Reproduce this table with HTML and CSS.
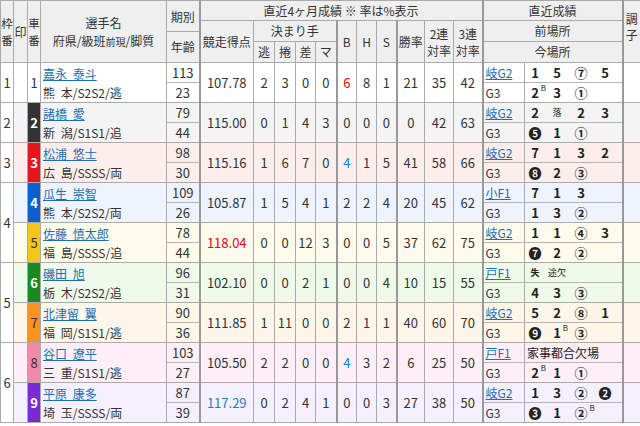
FILE: index.html
```html
<!DOCTYPE html>
<html lang="ja">
<head>
<meta charset="utf-8">
<title>出走表</title>
<link rel="stylesheet" href="styles.css">
</head>
<body>
<table class="tbl">
<colgroup>
<col class="c-waku"><col class="c-mark"><col class="c-sha"><col class="c-name"><col class="c-kb">
<col class="c-score"><col class="c-k1"><col class="c-k2"><col class="c-k3"><col class="c-k4">
<col class="c-b"><col class="c-h"><col class="c-s"><col class="c-r1"><col class="c-r2"><col class="c-r3">
<col class="c-race"><col class="c-res"><col class="c-cho">
</colgroup>
<thead>
<tr class="h1">
<th rowspan="3" class="vt">枠<br>番</th>
<th rowspan="3">印</th>
<th rowspan="3" class="vt">車<br>番</th>
<th rowspan="3" class="hname"><div class="hn1">選手名</div><div class="hn2">府県/級班<span class="sm">前現</span>/脚質</div></th>
<th rowspan="3" class="hkb"><div class="kb1">期別</div><div class="kb2">年齢</div></th>
<th colspan="11" class="tl">直近4ヶ月成績 ※ 率は%表示</th>
<th colspan="2" class="tl">直近成績</th>
<th rowspan="3" class="hcho tl">調<br>子</th>
</tr>
<tr class="h2">
<th rowspan="2" class="tl">競走得点</th>
<th colspan="4">決まり手</th>
<th rowspan="2" class="tl">B</th>
<th rowspan="2">H</th>
<th rowspan="2">S</th>
<th rowspan="2" class="tl">勝率</th>
<th rowspan="2" class="two">2連<br>対率</th>
<th rowspan="2" class="two">3連<br>対率</th>
<th colspan="2" class="tl">前場所</th>
</tr>
<tr class="h3">
<th>逃</th><th>捲</th><th>差</th><th>マ</th>
<th colspan="2" class="tl">今場所</th>
</tr>
</thead>
<tbody>
<!-- 1 -->
<tr class="r1 a">
<td rowspan="2" class="waku">1</td>
<td rowspan="2" class="mark"></td>
<td rowspan="2" class="sha s1">1</td>
<td rowspan="2" class="name"><div class="nm"><a href="#">嘉永 泰斗</a></div><div class="info">熊 本/S2S2/逃</div></td>
<td class="kb">113</td>
<td rowspan="2" class="tl">107.78</td>
<td rowspan="2">2</td><td rowspan="2">3</td><td rowspan="2">0</td><td rowspan="2">0</td>
<td rowspan="2" class="tl red">6</td><td rowspan="2">8</td><td rowspan="2">1</td>
<td rowspan="2" class="tl">21</td><td rowspan="2">35</td><td rowspan="2">42</td>
<td class="race tl"><a href="#">岐G2</a></td>
<td class="res"><div class="slots"><span>1</span><span>5</span><span>⑦</span><span>5</span></div></td>
<td rowspan="2" class="cho tl"></td>
</tr>
<tr class="r1 b">
<td class="kb">23</td>
<td class="race tl">G3</td>
<td class="res"><div class="slots"><span>2<i class="sup">B</i></span><span>3</span><span>①</span><span></span></div></td>
</tr>
<!-- 2 -->
<tr class="r2 a">
<td rowspan="2" class="waku">2</td>
<td rowspan="2" class="mark"></td>
<td rowspan="2" class="sha s2">2</td>
<td rowspan="2" class="name"><div class="nm"><a href="#">諸橋 愛</a></div><div class="info">新 潟/S1S1/追</div></td>
<td class="kb">79</td>
<td rowspan="2" class="tl">115.00</td>
<td rowspan="2">0</td><td rowspan="2">1</td><td rowspan="2">4</td><td rowspan="2">3</td>
<td rowspan="2" class="tl">0</td><td rowspan="2">0</td><td rowspan="2">0</td>
<td rowspan="2" class="tl">0</td><td rowspan="2">42</td><td rowspan="2">63</td>
<td class="race tl"><a href="#">岐G2</a></td>
<td class="res"><div class="slots"><span>2</span><span class="note">落</span><span>2</span><span>3</span></div></td>
<td rowspan="2" class="cho tl"></td>
</tr>
<tr class="r2 b">
<td class="kb">44</td>
<td class="race tl">G3</td>
<td class="res"><div class="slots"><span>❺</span><span>1</span><span>①</span><span></span></div></td>
</tr>
<!-- 3 -->
<tr class="r3 a">
<td rowspan="2" class="waku">3</td>
<td rowspan="2" class="mark"></td>
<td rowspan="2" class="sha s3">3</td>
<td rowspan="2" class="name"><div class="nm"><a href="#">松浦 悠士</a></div><div class="info">広 島/SSSS/両</div></td>
<td class="kb">98</td>
<td rowspan="2" class="tl">115.16</td>
<td rowspan="2">1</td><td rowspan="2">6</td><td rowspan="2">7</td><td rowspan="2">0</td>
<td rowspan="2" class="tl blue">4</td><td rowspan="2">1</td><td rowspan="2">5</td>
<td rowspan="2" class="tl">41</td><td rowspan="2">58</td><td rowspan="2">66</td>
<td class="race tl"><a href="#">岐G2</a></td>
<td class="res"><div class="slots"><span>7</span><span>1</span><span>3</span><span>2</span></div></td>
<td rowspan="2" class="cho tl"></td>
</tr>
<tr class="r3 b">
<td class="kb">30</td>
<td class="race tl">G3</td>
<td class="res"><div class="slots"><span>❽</span><span>2</span><span>③</span><span></span></div></td>
</tr>
<!-- 4 -->
<tr class="r4 a">
<td rowspan="4" class="waku">4</td>
<td rowspan="2" class="mark"></td>
<td rowspan="2" class="sha s4">4</td>
<td rowspan="2" class="name"><div class="nm"><a href="#">瓜生 崇智</a></div><div class="info">熊 本/S2S2/両</div></td>
<td class="kb">109</td>
<td rowspan="2" class="tl">105.87</td>
<td rowspan="2">1</td><td rowspan="2">5</td><td rowspan="2">4</td><td rowspan="2">1</td>
<td rowspan="2" class="tl">2</td><td rowspan="2">2</td><td rowspan="2">4</td>
<td rowspan="2" class="tl">20</td><td rowspan="2">45</td><td rowspan="2">62</td>
<td class="race tl"><a href="#">小F1</a></td>
<td class="res"><div class="slots"><span>7</span><span>1</span><span>3</span><span></span></div></td>
<td rowspan="2" class="cho tl"></td>
</tr>
<tr class="r4 b">
<td class="kb">26</td>
<td class="race tl">G3</td>
<td class="res"><div class="slots"><span>1</span><span>3</span><span>②</span><span></span></div></td>
</tr>
<!-- 5 -->
<tr class="r5 a">
<td rowspan="2" class="mark"></td>
<td rowspan="2" class="sha s5">5</td>
<td rowspan="2" class="name"><div class="nm"><a href="#">佐藤 慎太郎</a></div><div class="info">福 島/SSSS/追</div></td>
<td class="kb">78</td>
<td rowspan="2" class="tl red">118.04</td>
<td rowspan="2">0</td><td rowspan="2">0</td><td rowspan="2">12</td><td rowspan="2">3</td>
<td rowspan="2" class="tl">0</td><td rowspan="2">0</td><td rowspan="2">5</td>
<td rowspan="2" class="tl">37</td><td rowspan="2">62</td><td rowspan="2">75</td>
<td class="race tl"><a href="#">岐G2</a></td>
<td class="res"><div class="slots"><span>1</span><span>1</span><span>④</span><span>3</span></div></td>
<td rowspan="2" class="cho tl"></td>
</tr>
<tr class="r5 b">
<td class="kb">44</td>
<td class="race tl">G3</td>
<td class="res"><div class="slots"><span>❼</span><span>2</span><span>②</span><span></span></div></td>
</tr>
<!-- 6 -->
<tr class="r6 a">
<td rowspan="4" class="waku">5</td>
<td rowspan="2" class="mark"></td>
<td rowspan="2" class="sha s6">6</td>
<td rowspan="2" class="name"><div class="nm"><a href="#">磯田 旭</a></div><div class="info">栃 木/S2S2/追</div></td>
<td class="kb">96</td>
<td rowspan="2" class="tl">102.10</td>
<td rowspan="2">0</td><td rowspan="2">0</td><td rowspan="2">2</td><td rowspan="2">1</td>
<td rowspan="2" class="tl">0</td><td rowspan="2">0</td><td rowspan="2">4</td>
<td rowspan="2" class="tl">10</td><td rowspan="2">15</td><td rowspan="2">55</td>
<td class="race tl"><a href="#">戸F1</a></td>
<td class="res"><div class="slots"><span class="note b">失</span><span class="note">途欠</span><span></span><span></span></div></td>
<td rowspan="2" class="cho tl"></td>
</tr>
<tr class="r6 b">
<td class="kb">31</td>
<td class="race tl">G3</td>
<td class="res"><div class="slots"><span>4</span><span>3</span><span>③</span><span></span></div></td>
</tr>
<!-- 7 -->
<tr class="r7 a">
<td rowspan="2" class="mark"></td>
<td rowspan="2" class="sha s7">7</td>
<td rowspan="2" class="name"><div class="nm"><a href="#">北津留 翼</a></div><div class="info">福 岡/S1S1/逃</div></td>
<td class="kb">90</td>
<td rowspan="2" class="tl">111.85</td>
<td rowspan="2">1</td><td rowspan="2">11</td><td rowspan="2">0</td><td rowspan="2">0</td>
<td rowspan="2" class="tl">2</td><td rowspan="2">1</td><td rowspan="2">1</td>
<td rowspan="2" class="tl">40</td><td rowspan="2">60</td><td rowspan="2">70</td>
<td class="race tl"><a href="#">岐G2</a></td>
<td class="res"><div class="slots"><span>5</span><span>2</span><span>⑧</span><span>1</span></div></td>
<td rowspan="2" class="cho tl"></td>
</tr>
<tr class="r7 b">
<td class="kb">36</td>
<td class="race tl">G3</td>
<td class="res"><div class="slots"><span>❾</span><span>1<i class="sup">B</i></span><span>③</span><span></span></div></td>
</tr>
<!-- 8 -->
<tr class="r8 a">
<td rowspan="4" class="waku">6</td>
<td rowspan="2" class="mark"></td>
<td rowspan="2" class="sha s8">8</td>
<td rowspan="2" class="name"><div class="nm"><a href="#">谷口 遼平</a></div><div class="info">三 重/S1S1/逃</div></td>
<td class="kb">103</td>
<td rowspan="2" class="tl">105.50</td>
<td rowspan="2">2</td><td rowspan="2">2</td><td rowspan="2">0</td><td rowspan="2">0</td>
<td rowspan="2" class="tl blue">4</td><td rowspan="2">3</td><td rowspan="2">2</td>
<td rowspan="2" class="tl">6</td><td rowspan="2">25</td><td rowspan="2">50</td>
<td class="race tl"><a href="#">戸F1</a></td>
<td class="res"><div class="slots"><span class="absent">家事都合欠場</span></div></td>
<td rowspan="2" class="cho tl"></td>
</tr>
<tr class="r8 b">
<td class="kb">27</td>
<td class="race tl">G3</td>
<td class="res"><div class="slots"><span>2<i class="sup">B</i></span><span>1</span><span>①</span><span></span></div></td>
</tr>
<!-- 9 -->
<tr class="r9 a">
<td rowspan="2" class="mark"></td>
<td rowspan="2" class="sha s9">9</td>
<td rowspan="2" class="name"><div class="nm"><a href="#">平原 康多</a></div><div class="info">埼 玉/SSSS/両</div></td>
<td class="kb">87</td>
<td rowspan="2" class="tl blue">117.29</td>
<td rowspan="2">0</td><td rowspan="2">2</td><td rowspan="2">4</td><td rowspan="2">1</td>
<td rowspan="2" class="tl">0</td><td rowspan="2">0</td><td rowspan="2">3</td>
<td rowspan="2" class="tl">27</td><td rowspan="2">38</td><td rowspan="2">50</td>
<td class="race tl"><a href="#">岐G2</a></td>
<td class="res"><div class="slots"><span>1</span><span>3</span><span>②</span><span>❷</span></div></td>
<td rowspan="2" class="cho tl"></td>
</tr>
<tr class="r9 b">
<td class="kb">39</td>
<td class="race tl">G3</td>
<td class="res"><div class="slots"><span>❸</span><span>1</span><span>②<i class="sup">B</i></span><span></span></div></td>
</tr>
</tbody>
</table>
</body>
</html>
```

FILE: styles.css
```css
html, body {
  margin: 0;
  padding: 0;
  background: #ffffff;
}

body {
  font-family: "Noto Sans CJK JP", "DejaVu Sans", sans-serif;
  color: #333333;
}

.tbl {
  width: 640px;
  table-layout: fixed;
  border-collapse: collapse;
  font-size: 13px;
}

.c-waku { width: 13px; }
.c-mark { width: 14px; }
.c-sha { width: 13px; }
.c-name { width: 126px; }
.c-kb { width: 33px; }
.c-score { width: 54px; }
.c-k1 { width: 21px; }
.c-k2 { width: 21px; }
.c-k3 { width: 20px; }
.c-k4 { width: 21px; }
.c-b { width: 20px; }
.c-h { width: 20px; }
.c-s { width: 20px; }
.c-r1 { width: 28px; }
.c-r2 { width: 29px; }
.c-r3 { width: 29px; }
.c-race { width: 42px; }
.c-res { width: 98px; }
.c-cho { width: 18px; }

.tbl th,
.tbl td {
  border: 1px solid #aaaaaa;
  padding: 0;
  text-align: center;
  vertical-align: middle;
  overflow: hidden;
  white-space: nowrap;
}

.tbl th {
  background: #efefef;
  font-weight: normal;
  font-size: 12px;
  line-height: 14px;
  color: #333333;
}

.tbl .tl {
  border-left: 2px solid #999999;
}

tr.h1 { height: 20px; }
tr.h2 { height: 21px; }
tr.h3 { height: 21px; }

.vt {
  line-height: 17px !important;
  font-size: 11.5px !important;
}

.hname .hn1 {
  line-height: 18px;
  padding-top: 2px;
}

.hname .hn2 {
  line-height: 18px;
}

.sm {
  font-size: 10px;
}

.hkb {
  vertical-align: top;
}

.hkb div {
  height: 29px;
  line-height: 29px;
}

.hkb .kb1 {
  border-bottom: 1px solid #aaaaaa;
}

.hcho {
  vertical-align: top !important;
  line-height: 16px !important;
  padding-top: 10px !important;
}

.two {
  line-height: 17px !important;
}

tr.a, tr.b { height: 20px; }

.tbl td {
  line-height: 18px;
}

tr.a .kb, tr.a .race, tr.a .res {
  border-bottom: 1px solid #b5b5b5;
}

.waku {
  background: #ffffff;
}

.name {
  text-align: left !important;
  padding-left: 2px !important;
}

.name .nm,
.name .info {
  height: 19px;
  line-height: 19px;
  font-size: 12px;
  word-spacing: 3px;
}

a {
  color: #1b6fb3;
  text-decoration: underline;
}

.race {
  text-align: left !important;
  padding-left: 2px !important;
  font-size: 12px;
}

.res {
  text-align: left !important;
}

.slots {
  display: grid;
  grid-template-columns: 20px 24px 24px 24px;
  justify-items: center;
  align-items: center;
  height: 18px;
  font-weight: bold;
  font-size: 13px;
  color: #222222;
}

.slots span {
  position: relative;
  line-height: 18px;
}

.sup {
  position: absolute;
  font-style: normal;
  font-size: 8px;
  font-weight: normal;
  line-height: 8px;
  top: 0;
  left: 100%;
  margin-left: 2px;
}

.note {
  font-size: 9px;
  font-weight: normal;
}

.note.b {
  font-weight: bold;
}

.absent {
  grid-column: 1 / -1;
  justify-self: start;
  padding-left: 2px;
  font-weight: normal;
  font-size: 12px;
}

.red { color: #e60012; }
.blue { color: #1a7fc1; }

.sha {
  font-weight: bold;
  color: #ffffff;
}

.s1 { color: #333333; font-weight: normal; }
.s2 { background: #333333 !important; color: #ffffff; }
.s3 { background: #e8141c !important; }
.s4 { background: #0d5fcc !important; }
.s5 { background: #f5c518 !important; color: #333333; font-weight: normal; }
.s6 { background: #1a8a1f !important; }
.s7 { background: #f7931e !important; color: #333333; font-weight: normal; }
.s8 { background: #f08aab !important; color: #333333; font-weight: normal; }
.s9 { background: #7a2bd4 !important; }

tr.r1 td { background: #ffffff; }
tr.r2 td { background: #f4f4f4; }
tr.r3 td { background: #fdeeee; }
tr.r4 td { background: #eef3fd; }
tr.r5 td { background: #fffbec; }
tr.r6 td { background: #effaeb; }
tr.r7 td { background: #fef7e9; }
tr.r8 td { background: #fdeff5; }
tr.r9 td { background: #f4f0fd; }

tr td.waku { background: #ffffff; }
```
